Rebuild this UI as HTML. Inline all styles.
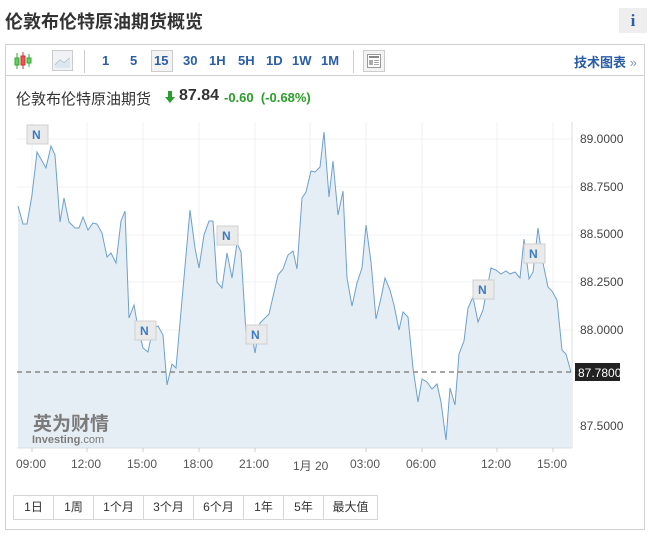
<!DOCTYPE html>
<html><head><meta charset="utf-8"><style>
*{margin:0;padding:0;box-sizing:border-box}
body{width:652px;height:540px;background:#fff;font-family:"Liberation Sans","Noto Sans CJK SC",sans-serif;position:relative;overflow:hidden;color:#333}
.a{position:absolute}
.title{left:5px;top:8px;font-size:18px;font-weight:bold;color:#333;letter-spacing:0px}
.info{left:619px;top:8px;width:28px;height:25px;background:#eee;color:#2a5da8;font:bold 17px "Liberation Serif",serif;text-align:center;line-height:25px}
.box{left:5px;top:44px;width:640px;height:486px;border:1px solid #d0d0d0}
.tb{left:5px;top:44px;width:640px;height:32px;border-bottom:1px solid #d0d0d0}
.t{top:53px;font-size:13px;font-weight:bold;color:#2a5da8}
.btns{left:13px;top:495px;height:25px;display:flex;border:1px solid #d6d6d6}
.btns div{border-right:1px solid #d6d6d6;font-size:12px;text-align:center;line-height:23px;color:#333}
.btns div:last-child{border-right:none}
.xl{top:457px;font-size:12px;color:#555}
.yl{left:580px;font-size:12px;color:#444}
</style></head><body>
<div class="a title">伦敦布伦特原油期货概览</div>
<div class="a info">i</div>
<div class="a box"></div>
<div class="a tb"></div>
<svg class="a" style="left:14px;top:51px" width="18" height="20"><line x1="3" y1="2" x2="3" y2="18" stroke="#3a3" /><rect x="1" y="7" width="4" height="7" fill="#6c6" stroke="#3a3"/><line x1="9" y1="1" x2="9" y2="18" stroke="#c33"/><rect x="7" y="5" width="4" height="9" fill="#e55" stroke="#c33"/><line x1="15" y1="3" x2="15" y2="16" stroke="#3a3"/><rect x="13" y="7" width="4" height="5" fill="#6c6" stroke="#3a3"/></svg>
<div class="a" style="left:52px;top:50px;width:21px;height:21px;border:1px solid #ccc;background:#f0f2f5"></div>
<svg class="a" style="left:53px;top:51px" width="19" height="19"><path d="M2 14 L7 9 L11 12 L17 7" stroke="#9ab" fill="none"/><path d="M2 14 L7 9 L11 12 L17 7 L17 17 L2 17Z" fill="#dde6ee"/></svg>
<div class="a" style="left:84px;top:50px;width:1px;height:23px;background:#ccc"></div>
<div class="a t" style="left:102px">1</div>
<div class="a t" style="left:130px">5</div>
<div class="a" style="left:151px;top:50px;width:22px;height:22px;border:1px solid #ccc;background:#f3f3f3"></div>
<div class="a t" style="left:154px">15</div>
<div class="a t" style="left:183px">30</div>
<div class="a t" style="left:209px">1H</div>
<div class="a t" style="left:238px">5H</div>
<div class="a t" style="left:266px">1D</div>
<div class="a t" style="left:292px">1W</div>
<div class="a t" style="left:321px">1M</div>
<div class="a" style="left:353px;top:50px;width:1px;height:23px;background:#ccc"></div>
<div class="a" style="left:363px;top:50px;width:22px;height:22px;border:1px solid #ccc;background:#f3f3f3"></div>
<svg class="a" style="left:367px;top:54px" width="14" height="14"><rect x="0.5" y="0.5" width="13" height="13" fill="#fff" stroke="#999"/><rect x="2" y="2" width="10" height="2" fill="#888"/><rect x="2" y="6" width="4" height="5" fill="#aaa"/><rect x="7" y="6" width="5" height="1" fill="#aaa"/><rect x="7" y="8" width="5" height="1" fill="#aaa"/><rect x="7" y="10" width="5" height="1" fill="#aaa"/></svg>
<div class="a" style="left:574px;top:52px;font-size:13px;font-weight:bold;color:#2a5da8">技术图表 <span style="font-weight:normal;color:#7a9cc8">»</span></div>

<div class="a" style="left:16px;top:88px;font-size:15px;color:#333">伦敦布伦特原油期货</div>
<svg class="a" style="left:165px;top:91px" width="10" height="12"><path d="M3 0H7V6H10L5 12L0 6H3Z" fill="#2a9d2a"/></svg>
<div class="a" style="left:179px;top:87px;font-size:16px;font-weight:bold;color:#333">87.84</div>
<div class="a" style="left:224px;top:90px;font-size:13px;font-weight:bold;color:#2a9d2a">-0.60&nbsp; (-0.68%)</div>

<svg class="a" style="left:0;top:0" width="652" height="540">
<g stroke="#eef0f3" stroke-width="1">
<line x1="17" y1="139" x2="571" y2="139"/><line x1="17" y1="187" x2="571" y2="187"/><line x1="17" y1="235" x2="571" y2="235"/><line x1="17" y1="282" x2="571" y2="282"/><line x1="17" y1="330" x2="571" y2="330"/><line x1="17" y1="426" x2="571" y2="426"/>
<line x1="32" y1="122" x2="32" y2="448"/><line x1="87" y1="122" x2="87" y2="448"/><line x1="143" y1="122" x2="143" y2="448"/><line x1="199" y1="122" x2="199" y2="448"/><line x1="255" y1="122" x2="255" y2="448"/><line x1="310" y1="122" x2="310" y2="448"/><line x1="366" y1="122" x2="366" y2="448"/><line x1="422" y1="122" x2="422" y2="448"/><line x1="497" y1="122" x2="497" y2="448"/><line x1="553" y1="122" x2="553" y2="448"/>
</g>
<path d="M18 206L23 224L27 224L32 195L37 152L46 168L51 146L55 155L60 222L64 198L69 222L75 228L79 228L83 217L88 230L93 223L97 224L102 233L107 257L111 253L116 263L121 221L125 211L129 318L134 305L138 328L143 348L148 352L153 328L158 326L163 335L167 385L172 364L176 368L190 210L195 248L199 268L204 235L209 221L213 221L217 282L222 288L227 253L232 278L237 243L241 252L246 333L251 330L255 353L260 323L269 314L278 275L283 269L288 255L293 251L297 269L302 198L306 192L311 171L315 172L320 167L324 132L329 197L333 161L338 215L343 191L347 278L352 306L357 283L362 268L366 225L371 262L376 319L381 298L385 278L390 290L394 305L399 330L403 312L408 317L413 368L418 402L422 379L427 382L432 389L437 384L441 402L446 440L450 388L455 405L459 354L464 341L468 308L473 297L478 322L483 310L491 268L496 270L501 274L506 271L510 274L515 272L520 278L524 239L529 279L533 272L538 228L543 263L548 287L552 291L557 300L562 350L566 354L571 372L571 448L18 448Z" fill="#e2ecf3" opacity="0.9"/>
<path d="M18 206L23 224L27 224L32 195L37 152L46 168L51 146L55 155L60 222L64 198L69 222L75 228L79 228L83 217L88 230L93 223L97 224L102 233L107 257L111 253L116 263L121 221L125 211L129 318L134 305L138 328L143 348L148 352L153 328L158 326L163 335L167 385L172 364L176 368L190 210L195 248L199 268L204 235L209 221L213 221L217 282L222 288L227 253L232 278L237 243L241 252L246 333L251 330L255 353L260 323L269 314L278 275L283 269L288 255L293 251L297 269L302 198L306 192L311 171L315 172L320 167L324 132L329 197L333 161L338 215L343 191L347 278L352 306L357 283L362 268L366 225L371 262L376 319L381 298L385 278L390 290L394 305L399 330L403 312L408 317L413 368L418 402L422 379L427 382L432 389L437 384L441 402L446 440L450 388L455 405L459 354L464 341L468 308L473 297L478 322L483 310L491 268L496 270L501 274L506 271L510 274L515 272L520 278L524 239L529 279L533 272L538 228L543 263L548 287L552 291L557 300L562 350L566 354L571 372" fill="none" stroke="#6ea0cc" stroke-width="1"/>
<line x1="17" y1="448" x2="572" y2="448" stroke="#d8dde2"/>
<line x1="572" y1="122" x2="572" y2="448" stroke="#d8dde2"/>
<line x1="17" y1="372" x2="571" y2="372" stroke="#888" stroke-width="1.5" stroke-dasharray="5,4"/>
<g stroke="#ccc"><line x1="32" y1="448" x2="32" y2="452"/><line x1="87" y1="448" x2="87" y2="452"/><line x1="143" y1="448" x2="143" y2="452"/><line x1="199" y1="448" x2="199" y2="452"/><line x1="255" y1="448" x2="255" y2="452"/><line x1="366" y1="448" x2="366" y2="452"/><line x1="422" y1="448" x2="422" y2="452"/><line x1="497" y1="448" x2="497" y2="452"/><line x1="553" y1="448" x2="553" y2="452"/></g>
<g font-family="Liberation Sans,sans-serif" font-size="12" font-weight="bold" fill="#3a7cc4">
<g><rect x="27" y="125" width="21" height="19" fill="#eaeaea" stroke="#d0d0d0"/><text x="32" y="139">N</text></g>
<g><rect x="135" y="321" width="21" height="19" fill="#eaeaea" stroke="#d0d0d0"/><text x="140" y="335">N</text></g>
<g><rect x="217" y="226" width="21" height="19" fill="#eaeaea" stroke="#d0d0d0"/><text x="222" y="240">N</text></g>
<g><rect x="246" y="325" width="21" height="19" fill="#eaeaea" stroke="#d0d0d0"/><text x="251" y="339">N</text></g>
<g><rect x="473" y="280" width="21" height="19" fill="#eaeaea" stroke="#d0d0d0"/><text x="478" y="294">N</text></g>
<g><rect x="524" y="244" width="21" height="19" fill="#eaeaea" stroke="#d0d0d0"/><text x="529" y="258">N</text></g>
</g>
<text x="33" y="430" font-family="Noto Sans CJK SC,sans-serif" font-size="19" font-weight="bold" fill="#7b7b7b">英为财情</text>
<text x="32" y="443" font-family="Liberation Sans,sans-serif" font-size="11" font-weight="bold" fill="#7b7b7b">Investing<tspan font-weight="normal">.com</tspan></text>
<rect x="575" y="363" width="45" height="18" fill="#222"/>
<text x="578" y="377" font-family="Liberation Sans,sans-serif" font-size="12" fill="#fff">87.7800</text>
</svg>
<div class="a yl" style="top:132px">89.0000</div>
<div class="a yl" style="top:180px">88.7500</div>
<div class="a yl" style="top:227px">88.5000</div>
<div class="a yl" style="top:275px">88.2500</div>
<div class="a yl" style="top:323px">88.0000</div>
<div class="a yl" style="top:419px">87.5000</div>
<div class="a xl" style="left:16px">09:00</div>
<div class="a xl" style="left:71px">12:00</div>
<div class="a xl" style="left:127px">15:00</div>
<div class="a xl" style="left:183px">18:00</div>
<div class="a xl" style="left:239px">21:00</div>
<div class="a xl" style="left:293px">1月 20</div>
<div class="a xl" style="left:350px">03:00</div>
<div class="a xl" style="left:406px">06:00</div>
<div class="a xl" style="left:481px">12:00</div>
<div class="a xl" style="left:537px">15:00</div>
<div class="a btns">
<div style="width:40px">1日</div><div style="width:40px">1周</div><div style="width:50px">1个月</div><div style="width:50px">3个月</div><div style="width:50px">6个月</div><div style="width:40px">1年</div><div style="width:40px">5年</div><div style="width:53px">最大值</div>
</div>
</body></html>
